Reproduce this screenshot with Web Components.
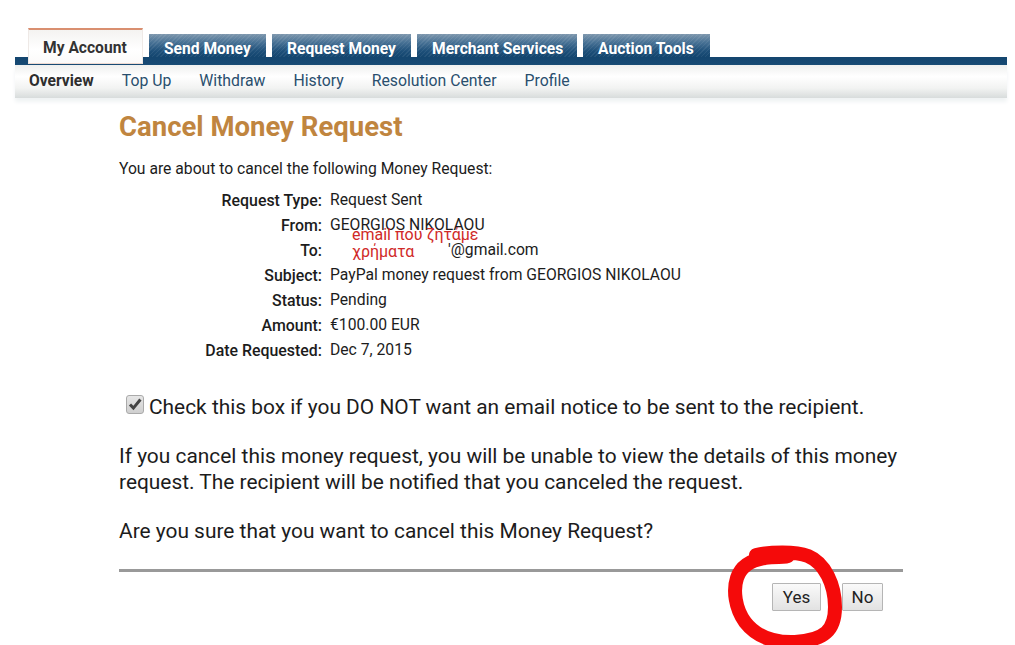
<!DOCTYPE html>
<html>
<head>
<meta charset="utf-8">
<title>Cancel Money Request</title>
<style>
  html, body { margin: 0; background: #fff; }
  body { font-family: Roboto, "Liberation Sans", sans-serif; color: #222; width: 1015px; height: 645px; overflow: hidden; position: relative; }
</style>
</head>
<body>
<main-tabs>
  <nav-tab active>My Account</nav-tab>
  <nav-tab style="width:117px">Send Money</nav-tab>
  <nav-tab style="width:139px">Request Money</nav-tab>
  <nav-tab style="width:160px">Merchant Services</nav-tab>
  <nav-tab style="width:127px">Auction Tools</nav-tab>
</main-tabs>
<sub-nav>
  <b>Overview</b><a>Top Up</a><a>Withdraw</a><a>History</a><a>Resolution Center</a><a>Profile</a>
</sub-nav>
<cancel-panel>
  <h1 slot="title">Cancel Money Request</h1>
  <span slot="intro">You are about to cancel the following Money Request:</span>
  <detail-row label="Request Type:">Request Sent</detail-row>
  <detail-row label="From:">GEORGIOS NIKOLAOU</detail-row>
  <detail-row label="To:"><span style="margin-left:118px">'@gmail.com</span></detail-row>
  <detail-row label="Subject:">PayPal money request from GEORGIOS NIKOLAOU</detail-row>
  <detail-row label="Status:">Pending</detail-row>
  <detail-row label="Amount:">€100.00 EUR</detail-row>
  <detail-row label="Date Requested:">Dec 7, 2015</detail-row>
</cancel-panel>
<hand-notes></hand-notes>

<script>
class MainTabs extends HTMLElement {
  constructor() {
    super();
    this.attachShadow({ mode: 'open' });
    this.shadowRoot.innerHTML = `
      <style>
        :host { display: block; margin: 28px 8px 0 15px; height: 37px; box-sizing: border-box; padding-left: 13px;
          background: linear-gradient(#fff 0, #fff 29px, #14466f 29px, #174a74 37px); }
        .row { display: flex; gap: 6px; height: 37px; align-items: flex-start; }
      </style>
      <div class="row"><slot></slot></div>`;
  }
}

class NavTab extends HTMLElement {
  constructor() {
    super();
    this.attachShadow({ mode: 'open' });
    this.shadowRoot.innerHTML = `
      <style>
        :host { display: block; box-sizing: border-box; height: 23px; margin-top: 6px; padding-left: 15px; color: #fff;
          font-size: 15.6px; font-weight: 700; line-height: 30px; white-space: nowrap;
          background: repeating-linear-gradient(135deg, rgba(255,255,255,.07) 0 1px, transparent 1px 3px), linear-gradient(#7f98ae, #4a7396 35%, #1d4f79 75%, #14466f); }
        :host([active]) { width: 115px; height: 36px; margin-top: 0; padding: 0 0 0 14px; color: #333;
          background: linear-gradient(#f4f3f1, #fff 60%, #fbfaf9); border-top: 2px solid #d98f70; border-bottom: 1px solid #eed9d0;
          border-left: 1px solid #eee9e6; border-right: 1px solid #eee9e6; line-height: 36px; }
      </style>
      <slot></slot>`;
  }
}

class SubNav extends HTMLElement {
  constructor() {
    super();
    this.attachShadow({ mode: 'open' });
    this.shadowRoot.innerHTML = `
      <style>
        :host { display: flex; gap: 28px; margin: 0 8px 0 15px; height: 33px; padding-left: 14px; box-sizing: border-box;
          font-size: 15.8px; line-height: 32px; color: #2a4f6e;
          background: linear-gradient(#eff0ef, #fff 35%, #f2f3f2 70%, #d8dcdc);
          box-shadow: 0 4px 4px #f0f3f4; }
        ::slotted(b) { color: #2e2e2e; font-weight: 700; font-size: 15.6px; }
      </style>
      <slot></slot>`;
  }
}

class CancelPanel extends HTMLElement {
  constructor() {
    super();
    this.attachShadow({ mode: 'open' });
    this.shadowRoot.innerHTML = `
      <style>
        :host { display: block; margin: 10px 0 0 119px; width: 784px; color: #1c1c1c; }
        ::slotted(h1) { margin: 0; font-size: 27.5px; line-height: 37px; font-weight: 700; color: #c0853f; }
        .intro { margin-top: 14px; font-size: 15.7px; line-height: 20px; }
        .details { margin-top: 8px; }
        .check { display: flex; align-items: center; gap: 5px; margin: 32.3px 0 0 7px; font-size: 20.9px; line-height: 26px; }
        .box { width: 18px; height: 19px; box-sizing: border-box; border: 1px solid #aaa; border-radius: 3px; margin-top: -6px;
          background: linear-gradient(#e6e6e6, #cfcfcf); display: flex; align-items: center; justify-content: center; }
        p { margin: 24px 0 0; font-size: 20.9px; line-height: 25.5px; }
        hr { margin: 24px 0 0; border: 0; height: 3px; background: #999; }
        .actions { display: flex; justify-content: flex-end; gap: 21px; margin: 11px 20px 0 0; }
        button { font: 17px Roboto, "Liberation Sans", sans-serif; color: #222; height: 28px; padding: 0; box-sizing: border-box;
          border: 1px solid #b5b5b5; border-radius: 1px; background: linear-gradient(#fafafa, #e2e2e2); }
        .yes { width: 49px; }
        .no { width: 41px; }
      </style>
      <slot name="title"></slot>
      <div class="intro"><slot name="intro"></slot></div>
      <div class="details"><slot></slot></div>
      <div class="check">
        <span class="box"><svg width="14" height="14" viewBox="0 0 14 14"><path d="M2 7.5l3.4 3.6L12.4 2.5" fill="none" stroke="#444" stroke-width="3"/></svg></span>
        <span>Check this box if you DO NOT want an email notice to be sent to the recipient.</span>
      </div>
      <p>If you cancel this money request, you will be unable to view the details of this money request. The recipient will be notified that you canceled the request.</p>
      <p>Are you sure that you want to cancel this Money Request?</p>
      <hr>
      <div class="actions"><button class="yes">Yes</button><button class="no">No</button></div>`;
  }
}

class DetailRow extends HTMLElement {
  constructor() {
    super();
    this.attachShadow({ mode: 'open' });
    this.shadowRoot.innerHTML = `
      <style>
        :host { display: grid; grid-template-columns: 203px 1fr; column-gap: 8px; font-size: 15.7px; line-height: 25px; height: 25px; }
        .label { text-align: right; font-weight: 500; font-size: 15.9px; line-height: 27px; height: 25px; }
      </style>
      <span class="label"></span><span><slot></slot></span>`;
    this.shadowRoot.querySelector('.label').textContent = this.getAttribute('label');
  }
}

// handwritten marks drawn over the screenshot
class HandNotes extends HTMLElement {
  constructor() {
    super();
    this.attachShadow({ mode: 'open' });
    this.shadowRoot.innerHTML = `
      <style>
        :host { display: block; position: absolute; inset: 0; pointer-events: none; }
        .note { position: absolute; color: #d02a28; font: 400 16px/17px Roboto, "Noto Sans", sans-serif; white-space: nowrap; }
        svg { position: absolute; left: 0; top: 0; }
      </style>
      <span class="note" style="left:352px;top:226px">email που ζητάμε</span>
      <span class="note" style="left:352px;top:243px">χρήματα</span>
      <svg width="1015" height="645" viewBox="0 0 1015 645">
        <path d="M756 555 C770 552 795 551 808 556 C825 563 835 585 835 607 C835 630 825 640 795 642 C770 643 755 635 745 622 C735 608 733 590 737 578 C741 566 752 560 765 558 C775 556 785 558 788 556" fill="none" stroke="#f50a0a" stroke-width="14" stroke-linecap="round" stroke-linejoin="round"/>
      </svg>`;
  }
}

customElements.define('main-tabs', MainTabs);
customElements.define('nav-tab', NavTab);
customElements.define('sub-nav', SubNav);
customElements.define('cancel-panel', CancelPanel);
customElements.define('detail-row', DetailRow);
customElements.define('hand-notes', HandNotes);
</script>
</body>
</html>
